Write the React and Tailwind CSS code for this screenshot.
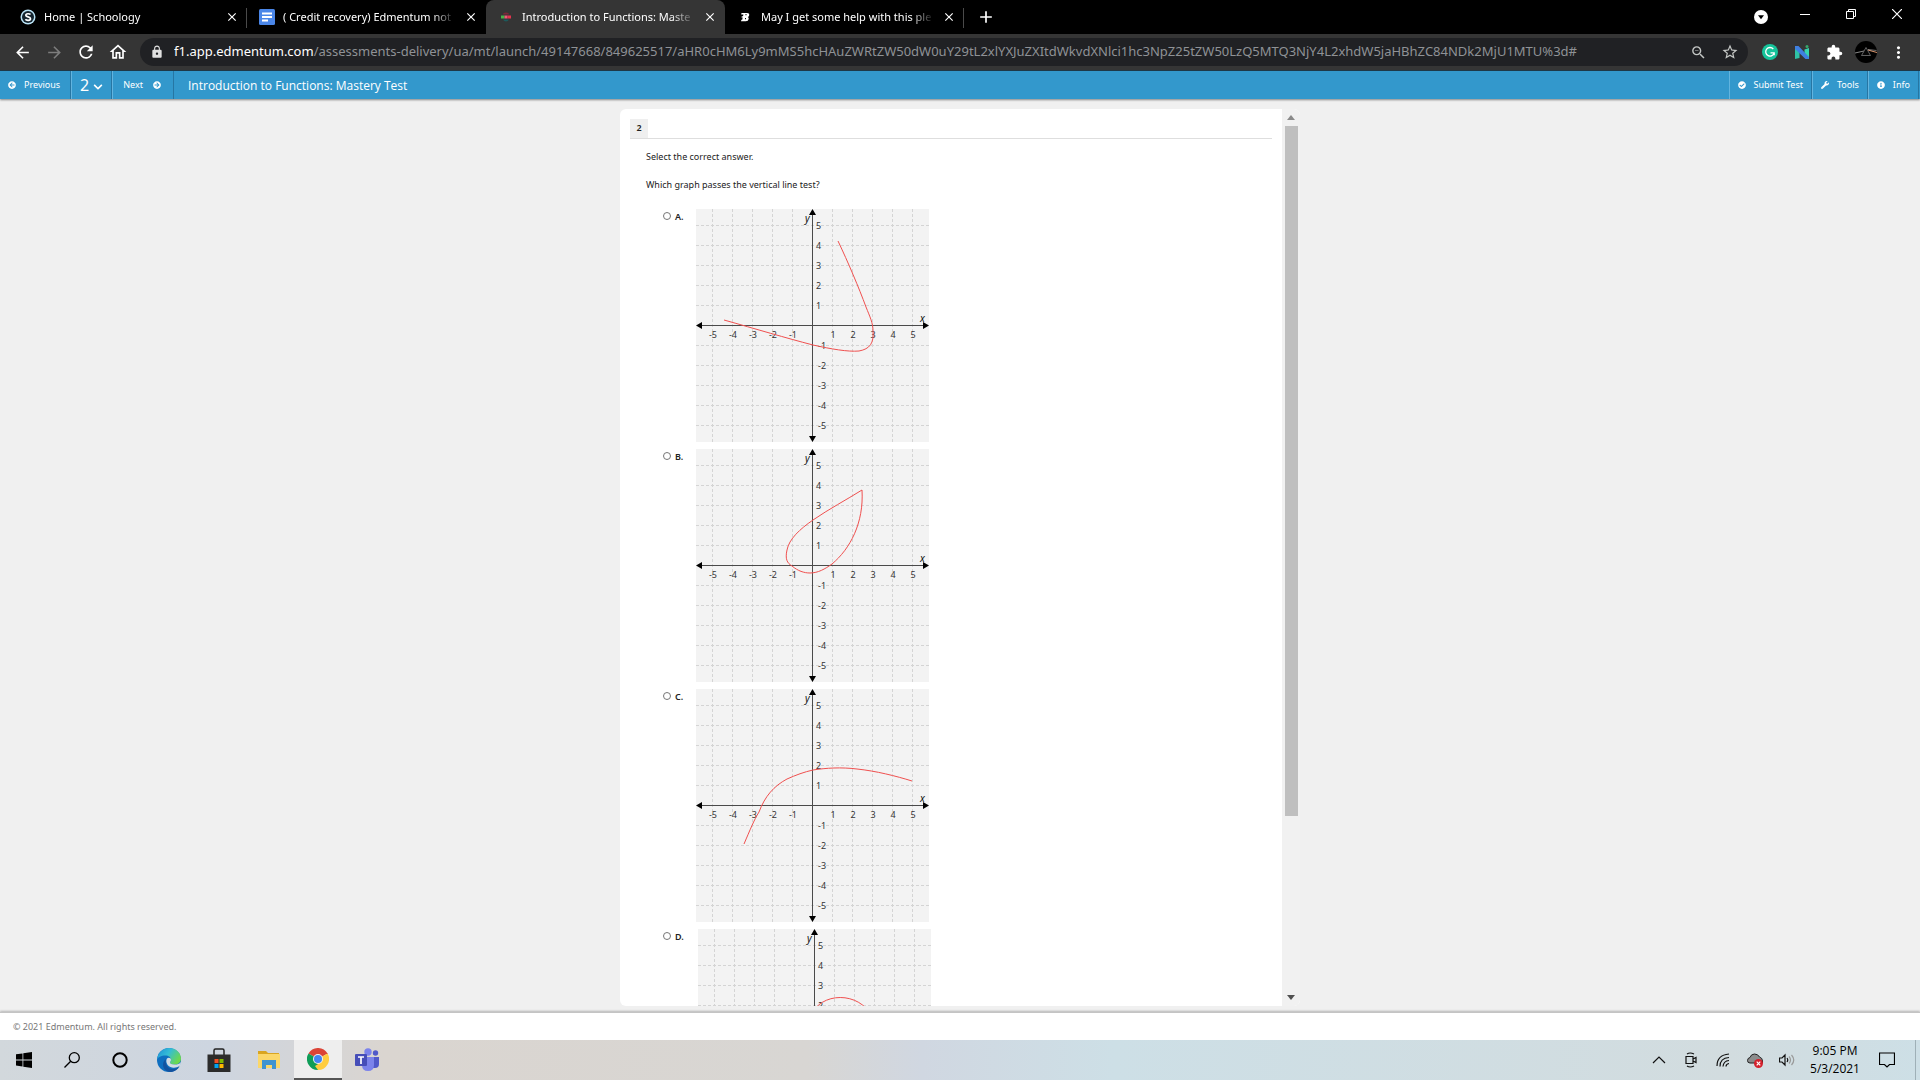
import { useState } from "react";
import {
  MdArrowBack,
  MdArrowForward,
  MdRefresh,
  MdOutlineHome,
  MdLock,
  MdClose,
  MdAdd,
  MdStarBorder,
  MdOutlineZoomOut,
  MdExtension,
  MdMoreVert,
} from "react-icons/md";
import {
  FaArrowCircleLeft,
  FaArrowCircleRight,
  FaCheckCircle,
  FaInfoCircle,
  FaWrench,
  FaChevronDown,
} from "react-icons/fa";

const tabs = [
  { title: "Home | Schoology", icon: "schoology" },
  { title: "( Credit recovery) Edmentum not", icon: "docs" },
  { title: "Introduction to Functions: Maste", icon: "edmentum", active: true },
  { title: "May I get some help with this ple", icon: "brainly" },
];

const choices = [
  {
    letter: "A",
    curve:
      "M28 111 C60 120 90 129 117 136 C135 140 152 143 163 142 C174 140 178 134 177 122 C177 114 174 108 170 98 C163 79 152 53 142 32",
  },
  {
    letter: "B",
    curve:
      "M166 41 C150 51 133 60 117 71 C104 80 93 90 91 101 C89 110 91 114 96 117 C102 122 108 124 114 124 C122 124 129 120 136 115 C154 100 168 74 166 41Z",
  },
  {
    letter: "C",
    curve:
      "M48 155 C54 141 58 131 63 123 C69 107 78 97 91 90 C100 86 108 83 117 81 C130 79 145 78 161 80 C180 82 200 87 216 92",
  },
  { letter: "D", curve: "M112 88 C122 62 162 62 174 88", shifted: true },
];

const ticks = [-5, -4, -3, -2, -1, 1, 2, 3, 4, 5];

const Favicon = ({ name }) => {
  if (name === "schoology") {
    return (
      <svg viewBox="0 0 16 16" className="size-4 shrink-0">
        <circle cx="8" cy="8" r="7.5" fill="#b9e2f5" />
        <circle cx="8" cy="8" r="6" fill="#14232d" />
        <path
          d="M10.5 5.6C9.6 4.4 5.8 4.3 5.8 6.3C5.8 8.4 10.5 7.3 10.5 9.7C10.5 11.9 6.4 11.8 5.4 10.3"
          fill="none"
          stroke="#fff"
          strokeWidth="1.7"
        />
      </svg>
    );
  }
  if (name === "docs") {
    return (
      <svg viewBox="0 0 16 16" className="size-4 shrink-0">
        <rect width="16" height="16" rx="1.5" fill="#4a86e8" />
        <path d="M3 4.500h10M3 8h10M3 11.500h6" stroke="#fff" strokeWidth="1.8" />
      </svg>
    );
  }
  if (name === "edmentum") {
    return (
      <svg viewBox="0 0 16 16" className="size-4 shrink-0">
        <path d="M5 5.500h3v-2q-3 0-3 2M8 3.500v2h3q0-2-3-2" fill="#7c2638" />
        <path d="M3 6.500h3.500v3H3z" fill="#46b749" />
        <path d="M6.500 6.500h3v3h-3z" fill="#f05a78" />
        <path d="M9.500 6.500H13v3H9.500z" fill="#e8344e" />
        <path d="M5 10.500h6q-1 2-3 2t-3-2" fill="#1d5a5c" />
      </svg>
    );
  }
  return (
    <svg viewBox="0 0 16 16" className="size-4 shrink-0">
      <path
        d="M4.5 4h5.500q2.500 0 2.200 2.200Q12 7.600 10.700 8q1.300 .5 1 2.100Q11.300 12.300 8.800 12.300H4l.4-1.500h.8l.5-2.200H4.500l.3-1.400h1.200l.4-1.700H4.200z"
        fill="#fff"
      />
      <path d="M8.500 5.700h1M8 9.700h1" stroke="#000" strokeWidth="1.2" />
    </svg>
  );
};

const Tab = ({ title, icon, active, divider }) => (
  <div
    className={`relative flex h-full w-[239px] items-center rounded-t-lg pl-3 pr-2 ${
      active ? "bg-[#353535]" : ""
    }`}
  >
    <Favicon name={icon} />
    <span className="ml-2 flex-1 overflow-hidden whitespace-nowrap text-[11px] text-white [mask-image:linear-gradient(to_right,#000_86%,transparent)]">
      {title}
    </span>
    <button aria-label="Close tab" className="ml-2 text-white">
      <MdClose size={14} />
    </button>
    {divider && <span className="absolute right-0 top-2 h-5 w-px bg-[#4a4a4a]" />}
  </div>
);

const TabStrip = () => (
  <div className="flex h-[34px] bg-black pl-2 text-white">
    {tabs.map((tab, index) => (
      <Tab key={tab.icon} {...tab} divider={index === 0 || index === 3} />
    ))}
    <button aria-label="New tab" className="ml-3">
      <MdAdd size={20} />
    </button>
    <div className="ml-auto flex">
      <button aria-label="Search tabs" className="mr-3.5 self-center">
        <svg viewBox="0 0 14 14" className="size-3.5">
          <circle cx="7" cy="7" r="7" fill="#fff" />
          <path d="M4 5.300h6L7 9.300z" fill="#000" />
        </svg>
      </button>
      <button aria-label="Minimize" className="flex h-7 w-[46px] items-center justify-center">
        <svg viewBox="0 0 10 10" className="size-2.5">
          <path d="M0 5.500h10" stroke="#fff" />
        </svg>
      </button>
      <button aria-label="Restore" className="flex h-7 w-[46px] items-center justify-center">
        <svg viewBox="0 0 10 10" className="size-2.5" fill="none" stroke="#fff">
          <path d="M.5 2.500h7v7h-7zM2.500 2.500v-2h7v7h-2" />
        </svg>
      </button>
      <button aria-label="Close" className="flex h-7 w-[46px] items-center justify-center">
        <svg viewBox="0 0 10 10" className="size-2.5">
          <path d="M0 0l10 10M10 0L0 10" stroke="#fff" strokeWidth="1.2" />
        </svg>
      </button>
    </div>
  </div>
);

const ToolButton = ({ label, children }) => (
  <button aria-label={label} className="flex size-8 items-center justify-center">
    {children}
  </button>
);

const AddressBar = () => (
  <div className="flex h-[37px] items-center border-b border-[#1f3a4a] bg-[#353535] px-1.5 text-white">
    <ToolButton label="Back">
      <MdArrowBack size={19} />
    </ToolButton>
    <ToolButton label="Forward">
      <MdArrowForward size={19} className="text-[#7d7d7d]" />
    </ToolButton>
    <ToolButton label="Reload">
      <MdRefresh size={20} />
    </ToolButton>
    <ToolButton label="Home">
      <MdOutlineHome size={20} />
    </ToolButton>
    <div className="mx-1.5 flex h-7 min-w-0 flex-1 items-center rounded-full bg-[#202124] pl-2.5 pr-0.5">
      <MdLock size={14} className="mr-2.5 shrink-0 text-[#e0e0e0]" />
      <p className="min-w-0 flex-1 overflow-hidden whitespace-nowrap text-[13px] text-[#8f9296]">
        <span className="text-white">f1.app.edmentum.com</span>
        /assessments-delivery/ua/mt/launch/49147668/849625517/aHR0cHM6Ly9mMS5hcHAuZWRtZW50dW0uY29tL2xlYXJuZXItdWkvdXNlci1hc3NpZ25tZW50LzQ5MTQ3NjY4L2xhdW5jaHBhZC84NDk2MjU1MTU%3d#
      </p>
      <button aria-label="Zoom" className="flex size-8 items-center justify-center text-[#c4c7c5]">
        <MdOutlineZoomOut size={17} />
      </button>
      <button aria-label="Bookmark" className="flex size-8 items-center justify-center text-[#c4c7c5]">
        <MdStarBorder size={18} />
      </button>
    </div>
    <ToolButton label="Grammarly">
      <svg viewBox="0 0 16 16" className="size-4">
        <circle cx="8" cy="8" r="8" fill="#15c39a" />
        <path
          d="M11.300 5A4.300 4.300 0 1 0 12.200 8.800M8.500 8.800h3.700v2.500"
          fill="none"
          stroke="#fff"
          strokeWidth="1.3"
        />
      </svg>
    </ToolButton>
    <ToolButton label="Nearpod">
      <svg viewBox="0 0 16 16" className="size-4">
        <path d="M1 2l4.500 3v9L1 15z" fill="#2fc2a5" />
        <path d="M10.500 5.500L15 4v11l-4.500-2z" fill="#36d3ae" />
        <path d="M1 2h3.500l10.500 11v2h-3.500L1 5z" fill="#3f7fe0" />
        <circle cx="13" cy="2.500" r="1.500" fill="#36a86b" />
      </svg>
    </ToolButton>
    <ToolButton label="Extensions">
      <MdExtension size={17} />
    </ToolButton>
    <ToolButton label="Profile">
      <svg viewBox="0 0 22 22" className="size-[22px]">
        <circle cx="11" cy="11" r="11" fill="#000" />
        <path d="M0 12l9-2" stroke="#aaa" strokeWidth=".8" />
        <path d="M13 9l9 2.500" stroke="#d6936c" strokeWidth="1.2" />
        <path d="M13 8.500l8.500 1" stroke="#bbb" strokeWidth=".6" />
        <path d="M11 6.500l4.500 8h-9z" fill="#050505" stroke="#777" strokeWidth=".8" />
      </svg>
    </ToolButton>
    <ToolButton label="Menu">
      <MdMoreVert size={19} />
    </ToolButton>
  </div>
);

const CourseBar = () => (
  <header className="relative z-10 flex h-7 bg-[#3398cc] text-[9px] text-white shadow-[0_1px_2px_rgba(0,0,0,0.45)]">
    <button className="flex items-center gap-2 border-r border-[#2676a3] pl-2 pr-2.5">
      <FaArrowCircleLeft size={8} />
      Previous
    </button>
    <button className="flex items-center gap-1 border-l border-r border-l-[#62b4df] border-r-[#2676a3] px-2 text-base">
      2
      <FaChevronDown size={10} className="mt-1" />
    </button>
    <button className="flex items-center gap-2.5 border-l border-r border-l-[#62b4df] border-r-[#2676a3] pl-2.5 pr-3">
      Next
      <FaArrowCircleRight size={8} />
    </button>
    <h1 className="self-center pl-3.5 pt-0.5 font-['Open_Sans',sans-serif] text-xs">
      Introduction to Functions: Mastery Test
    </h1>
    <div className="ml-auto flex">
      <button className="flex items-center gap-2 border-l border-r border-l-[#62b4df] border-r-[#2676a3] px-2">
        <FaCheckCircle size={8} />
        Submit Test
      </button>
      <button className="flex items-center gap-2 border-l border-r border-l-[#62b4df] border-r-[#2676a3] px-2">
        <FaWrench size={8} />
        Tools
      </button>
      <button className="flex items-center gap-2 border-l border-r border-l-[#62b4df] border-r-[#2676a3] px-2">
        <FaInfoCircle size={8} />
        Info
      </button>
      <span className="w-px" />
    </div>
  </header>
);

const Graph = ({ curve }) => (
  <svg viewBox="0 0 233 233" className="size-[233px] shrink-0 bg-[#f3f3f3]">
    <g stroke="#d4d4d4" strokeDasharray="3 2">
      {ticks.map((t) => (
        <path key={t} d={`M${116.5 + t * 20} 0V233M0 ${116.5 + t * 20}H233`} />
      ))}
    </g>
    <path d="M116.5 3V230M3 116.5H230" stroke="#4a4a4a" strokeWidth="1" />
    <path
      d="M116.5 0l3.500 6h-7zM116.5 233l3.500-6h-7zM0 116.500l6-3.500v7zM233 116.500l-6-3.500v7z"
      fill="#000"
    />
    <g fontSize="9" fill="#333">
      {ticks.map((t) => (
        <text key={t} x={117 + t * 20} y="129" textAnchor="middle">
          {t}
        </text>
      ))}
      {ticks.map((t) => (
        <text key={t} x={t < 0 ? 122 : 120} y={120 - t * 20}>
          {t}
        </text>
      ))}
    </g>
    <g fontSize="10" fontStyle="italic" fill="#111">
      <text x="109" y="13">
        y
      </text>
      <text x="224" y="113">
        x
      </text>
    </g>
    <path d={curve} fill="none" stroke="#f0504f" strokeWidth="1" />
  </svg>
);

const Question = () => {
  const [answer, setAnswer] = useState("");

  return (
    <section className="min-w-0 flex-1 overflow-y-auto px-2.5 pt-2.5 text-[9px] text-[#222] [scrollbar-width:none]">
      <div className="border-b border-[#dedede]">
        <h2 className="flex h-[19px] w-[18px] items-center justify-center bg-[#efefef] pb-0.5 font-semibold">
          2
        </h2>
      </div>
      <p className="ml-4 mt-3 leading-3">Select the correct answer.</p>
      <p className="ml-4 mt-4 leading-3">Which graph passes the vertical line test?</p>
      <div className="ml-8 mt-[18px] flex flex-col gap-[7px]">
        {choices.map(({ letter, curve, shifted }) => (
          <label key={letter} className="flex items-start">
            <input
              type="radio"
              name="answer"
              value={letter}
              checked={answer === letter}
              onChange={() => setAnswer(letter)}
              className="ml-px mt-[3px] size-2 appearance-none rounded-full border border-[#767676] bg-white checked:bg-[#3398cc]"
            />
            <span className={`ml-1 mt-0.5 font-semibold leading-3 ${shifted ? "w-[23px]" : "w-[21px]"}`}>
              {letter}.
            </span>
            <Graph curve={curve} />
          </label>
        ))}
      </div>
    </section>
  );
};

const Scrollbar = () => (
  <div className="flex w-[18px] flex-col items-center bg-[#f1f1f1] py-1.5">
    <svg viewBox="0 0 8 5" className="h-[5px] w-2">
      <path d="M4 0l4 5H0z" fill="#8a8a8a" />
    </svg>
    <div className="my-1.5 flex w-[13px] flex-1 flex-col">
      <div className="h-4/5 bg-[#bfbfbf]" />
    </div>
    <svg viewBox="0 0 8 5" className="h-[5px] w-2">
      <path d="M0 0h8L4 5z" fill="#505050" />
    </svg>
  </div>
);

const TaskButton = ({ label, wide, children }) => (
  <button
    aria-label={label}
    className={`flex h-10 items-center justify-center ${wide ? "w-[50px]" : "w-12"}`}
  >
    {children}
  </button>
);

const TrayButton = ({ label, children }) => (
  <button aria-label={label} className="flex h-10 w-8 items-center justify-center">
    <svg viewBox="0 0 16 16" className="size-4" fill="none" stroke="#111" strokeWidth="1.2">
      {children}
    </svg>
  </button>
);

const Taskbar = () => (
  <footer className="flex h-10 items-center bg-[linear-gradient(to_right,#d2d8dc,#cdd5e0_11%,#dad5d0_20%,#d8d6d3_42%,#d0d7e1_48%,#cddfe6_58%,#d2dcdf_90%,#cddfe6)] text-black">
    <TaskButton label="Start">
      <svg viewBox="0 0 16 16" className="size-4">
        <path d="M0 2.300l6.500-.9v6.100H0zM7.300 1.300L16 0v7.500H7.300zM0 8.400h6.500v6.100L0 13.600zM7.300 8.400H16V16l-8.700-1.300z" />
      </svg>
    </TaskButton>
    <TaskButton label="Search">
      <svg viewBox="0 0 16 16" className="size-4" fill="none" stroke="#000" strokeWidth="1.3">
        <circle cx="10.3" cy="5.7" r="5" />
        <path d="M6.700 9.300L.5 15.500" />
      </svg>
    </TaskButton>
    <TaskButton label="Cortana">
      <svg viewBox="0 0 16 16" className="size-4">
        <circle cx="8" cy="8" r="6.7" fill="none" stroke="#000" strokeWidth="2" />
      </svg>
    </TaskButton>
    <TaskButton label="Microsoft Edge" wide>
      <svg viewBox="0 0 24 24" className="size-6">
        <defs>
          <linearGradient id="edgeTop" x1="0" y1="0" x2="1" y2="0.5">
            <stop offset="0" stopColor="#1b8fd6" />
            <stop offset="0.5" stopColor="#35bcd6" />
            <stop offset="1" stopColor="#6bd851" />
          </linearGradient>
        </defs>
        <circle cx="12" cy="12" r="12" fill="#0f6fc0" />
        <path
          d="M0 11.500C1 4.500 6 0 12 0c7 0 12 5 12 10.500 0 4-3 6-6.500 6-3 0-4.500-1-4.500-2 0-.8 1-1.200 1-2.700 0-2.300-2.300-4.300-5.500-4.300C4 7.500 1 9.500 0 11.500z"
          fill="url(#edgeTop)"
        />
        <path
          d="M9 11c-1.500 5 2 10 7 10 2.500 0 5-1 6.500-2.500C20 22.500 16.500 24 13 24 7 23.500 4.500 17.500 7 13z"
          fill="#1353a0"
        />
        <path
          d="M10 10.500c-2 3.500.5 8 5 9 3 .6 5.500-.2 7.300-1.500.7-.5 1.200.2.700 1l1-5c-1.500 2-3.500 2.500-6.500 2.500-3 0-4.500-1-4.500-2 0-.8 1-1.200 1-2.700 0-1.700-2.500-3-4-1.300z"
          fill="#d3dce4"
        />
      </svg>
    </TaskButton>
    <TaskButton label="Microsoft Store" wide>
      <svg viewBox="0 0 24 24" className="size-6">
        <path d="M7 7V2.500Q7 1 8.500 1h7Q17 1 17 2.500V7" fill="none" stroke="#222" strokeWidth="1.5" />
        <path d="M.5 6.500h23V24H.5z" fill="#2b2b2b" />
        <path d="M7.500 11h4v4h-4z" fill="#f25022" />
        <path d="M12.500 11h4v4h-4z" fill="#7fba00" />
        <path d="M7.500 16h4v4h-4z" fill="#00a4ef" />
        <path d="M12.500 16h4v4h-4z" fill="#ffb900" />
      </svg>
    </TaskButton>
    <TaskButton label="File Explorer" wide>
      <svg viewBox="0 0 22 20" className="h-5 w-[22px]">
        <path d="M0 1h8l2 2h11v4H0z" fill="#d9a520" />
        <path d="M0 4h22v14H0z" fill="#fbd769" />
        <path d="M4 10h14v9h-4v-4H8v4H4z" fill="#3f94d1" />
      </svg>
    </TaskButton>
    <button
      aria-label="Google Chrome"
      className="flex h-10 w-12 items-center justify-center border-b-2 border-[#555] bg-[#eeeeee]"
    >
      <svg viewBox="0 0 22 22" className="size-[22px]">
        <path d="M11 11L1.470 5.500A11 11 0 0 1 20.530 5.500z" fill="#db4437" />
        <path d="M11 11L20.530 5.500A11 11 0 0 1 11 22z" fill="#ffcd40" />
        <path d="M11 11V22A11 11 0 0 1 1.470 5.500z" fill="#0f9d58" />
        <path d="M11 6h9.800L20.500 5.500 15 4z" fill="#db4437" />
        <path d="M15.330 13.500L11 22 8 18z" fill="#ffcd40" />
        <circle cx="11" cy="11" r="5" fill="#f1f1f1" />
        <circle cx="11" cy="11" r="4" fill="#4285f4" />
      </svg>
    </button>
    <TaskButton label="Microsoft Teams" wide>
      <svg viewBox="0 0 24 24" className="size-6">
        <circle cx="20.5" cy="5" r="2.7" fill="#5059c9" />
        <path d="M17 9h7v7q0 4-4 4h-3z" fill="#5059c9" />
        <circle cx="13" cy="4" r="3.7" fill="#7b83eb" />
        <path d="M7 9h12v8q0 6-6 6t-6-6z" fill="#7b83eb" />
        <rect y="6" width="12" height="12" rx="1" fill="#464eb8" />
        <path d="M3 9h6M6 9v7" stroke="#fff" strokeWidth="1.7" />
      </svg>
    </TaskButton>
    <div className="ml-auto flex h-full items-center">
      <TrayButton label="Show hidden icons">
        <path d="M2 11l6-6 6 6" />
      </TrayButton>
      <TrayButton label="Meet Now">
        <path d="M3 4.500h7v7H3zM10 7l3-1.500v5L10 9M4 2q3-2 7 0M4 14q3 2 7 0" />
      </TrayButton>
      <TrayButton label="Network">
        <path d="M2 14Q2 3 14 2M5 14.500Q5 6 14 5.500M8 14.500Q8.500 9 14 8.500M11 14.500Q11 12 14 11.500" />
      </TrayButton>
      <button aria-label="OneDrive" className="flex h-10 w-8 items-center justify-center">
        <svg viewBox="0 0 16 16" className="size-4">
          <path
            d="M3 11Q.5 11 .5 8.500T3 5.500Q4 2 7.500 2t5 3Q15.500 6 15.500 9v2z"
            fill="#8c8c8c"
            stroke="#222"
          />
          <circle cx="11.5" cy="11.5" r="4.5" fill="#d4202c" />
          <path d="M9.700 9.700l3.600 3.600M13.300 9.700l-3.600 3.600" stroke="#fff" strokeWidth="1.2" />
        </svg>
      </button>
      <TrayButton label="Volume">
        <path d="M.5 6h2.500l3-3v10l-3-3H.5zM8 6q1.500 2 0 4" />
        <path d="M10 4.500q3 3.500 0 7M12.500 3q4.500 5 0 10" stroke="#999" />
      </TrayButton>
      <div className="w-16 text-center font-['Open_Sans',sans-serif] text-xs leading-[18px]">
        <p>9:05 PM</p>
        <p>5/3/2021</p>
      </div>
      <button aria-label="Notifications" className="flex size-10 items-center justify-center">
        <svg viewBox="0 0 16 16" className="size-4" fill="none" stroke="#000" strokeWidth="1.2">
          <path d="M.5 1h15v11.500h-5L8 15l-2.500-2.500h-5z" />
        </svg>
      </button>
      <div className="ml-2 h-full w-[5px] border-l border-[#9fb0b7]" />
    </div>
  </footer>
);

export default function App() {
  return (
    <div className="flex h-screen flex-col overflow-hidden bg-[#f0f0f0] font-['Noto_Sans','Open_Sans',sans-serif]">
      <TabStrip />
      <AddressBar />
      <CourseBar />
      <main className="flex min-h-0 flex-1 justify-center pb-1.5 pt-2.5">
        <div className="flex w-[680px] overflow-hidden rounded-md bg-white">
          <Question />
          <Scrollbar />
        </div>
      </main>
      <div className="flex h-7 items-center border-t border-[#c4c4c4] bg-white pl-[13px] text-[9px] text-[#777] shadow-[0_-1px_2px_rgba(0,0,0,0.25)]">
        © 2021 Edmentum. All rights reserved.
      </div>
      <Taskbar />
    </div>
  );
}
